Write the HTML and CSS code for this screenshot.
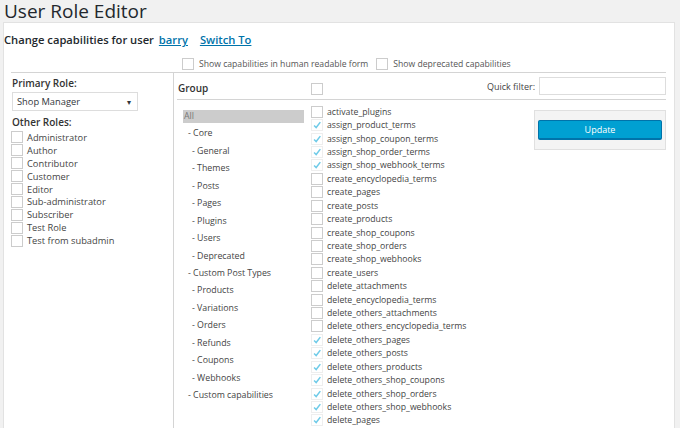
FILE: index.html
```html
<!DOCTYPE html>
<html>
<head>
<meta charset="utf-8">
<link rel="stylesheet" href="styles.css">
</head>
<body>
<h1 class="title">User Role Editor</h1>
<div class="panel">
  <div class="user-line">Change capabilities for user <a href="#" class="link barry">barry</a> <a href="#" class="link switch">Switch To</a></div>
  <div class="options">
    <label class="opt"><span class="cb"></span>Show capabilities in human readable form</label>
    <label class="opt"><span class="cb"></span>Show deprecated capabilities</label>
  </div>
  <div class="editor">
    <div class="roles">
      <div class="label">Primary Role:</div>
      <div class="select"><span>Shop Manager</span><span class="arrow">▾</span></div>
      <div class="label other">Other Roles:</div>
      <ul class="role-list">
        <li><span class="cb"></span>Administrator</li>
        <li><span class="cb"></span>Author</li>
        <li><span class="cb"></span>Contributor</li>
        <li><span class="cb"></span>Customer</li>
        <li><span class="cb"></span>Editor</li>
        <li><span class="cb"></span>Sub-administrator</li>
        <li><span class="cb"></span>Subscriber</li>
        <li><span class="cb"></span>Test Role</li>
        <li><span class="cb"></span>Test from subadmin</li>
      </ul>
    </div>
    <div class="caps">
      <div class="caps-head">
        <div class="group-title">Group</div>
        <span class="cb head-cb"></span>
        <div class="filter"><span>Quick filter:</span><span class="filter-input"></span></div>
      </div>
      <div class="caps-body">
        <ul class="groups">
          <li class="active">All</li>
          <li class="l1">- Core</li>
          <li class="l2">- General</li>
          <li class="l2">- Themes</li>
          <li class="l2">- Posts</li>
          <li class="l2">- Pages</li>
          <li class="l2">- Plugins</li>
          <li class="l2">- Users</li>
          <li class="l2">- Deprecated</li>
          <li class="l1">- Custom Post Types</li>
          <li class="l2">- Products</li>
          <li class="l2">- Variations</li>
          <li class="l2">- Orders</li>
          <li class="l2">- Refunds</li>
          <li class="l2">- Coupons</li>
          <li class="l2">- Webhooks</li>
          <li class="l1">- Custom capabilities</li>
        </ul>
        <ul class="cap-list">
          <li><span class="cb"></span>activate_plugins</li>
          <li><span class="cb on"><svg viewBox="0 0 12 12"><path d="M2.5 6.5 L5 9 L10 2.5"/></svg></span>assign_product_terms</li>
          <li><span class="cb on"><svg viewBox="0 0 12 12"><path d="M2.5 6.5 L5 9 L10 2.5"/></svg></span>assign_shop_coupon_terms</li>
          <li><span class="cb on"><svg viewBox="0 0 12 12"><path d="M2.5 6.5 L5 9 L10 2.5"/></svg></span>assign_shop_order_terms</li>
          <li><span class="cb on"><svg viewBox="0 0 12 12"><path d="M2.5 6.5 L5 9 L10 2.5"/></svg></span>assign_shop_webhook_terms</li>
          <li><span class="cb"></span>create_encyclopedia_terms</li>
          <li><span class="cb"></span>create_pages</li>
          <li><span class="cb"></span>create_posts</li>
          <li><span class="cb"></span>create_products</li>
          <li><span class="cb"></span>create_shop_coupons</li>
          <li><span class="cb"></span>create_shop_orders</li>
          <li><span class="cb"></span>create_shop_webhooks</li>
          <li><span class="cb"></span>create_users</li>
          <li><span class="cb"></span>delete_attachments</li>
          <li><span class="cb"></span>delete_encyclopedia_terms</li>
          <li><span class="cb"></span>delete_others_attachments</li>
          <li><span class="cb"></span>delete_others_encyclopedia_terms</li>
          <li><span class="cb on"><svg viewBox="0 0 12 12"><path d="M2.5 6.5 L5 9 L10 2.5"/></svg></span>delete_others_pages</li>
          <li><span class="cb on"><svg viewBox="0 0 12 12"><path d="M2.5 6.5 L5 9 L10 2.5"/></svg></span>delete_others_posts</li>
          <li><span class="cb on"><svg viewBox="0 0 12 12"><path d="M2.5 6.5 L5 9 L10 2.5"/></svg></span>delete_others_products</li>
          <li><span class="cb on"><svg viewBox="0 0 12 12"><path d="M2.5 6.5 L5 9 L10 2.5"/></svg></span>delete_others_shop_coupons</li>
          <li><span class="cb on"><svg viewBox="0 0 12 12"><path d="M2.5 6.5 L5 9 L10 2.5"/></svg></span>delete_others_shop_orders</li>
          <li><span class="cb on"><svg viewBox="0 0 12 12"><path d="M2.5 6.5 L5 9 L10 2.5"/></svg></span>delete_others_shop_webhooks</li>
          <li><span class="cb on"><svg viewBox="0 0 12 12"><path d="M2.5 6.5 L5 9 L10 2.5"/></svg></span>delete_pages</li>
          <li><span class="cb on"><svg viewBox="0 0 12 12"><path d="M2.5 6.5 L5 9 L10 2.5"/></svg></span>delete_posts</li>
        </ul>
        <div class="actions">
          <button class="update">Update</button>
        </div>
      </div>
    </div>
  </div>
</div>
</body>
</html>
```
FILE: styles.css
```css
html, body {
  margin: 0;
  padding: 0;
  height: 100%;
  overflow: hidden;
}
body {
  background: #f1f1f1;
  font-family: "Open Sans", "Liberation Sans", sans-serif;
  color: #444;
}
.title {
  margin: 0;
  padding: 2px 0 0 4px;
  font-size: 19px;
  font-weight: 400;
  line-height: 18px;
  color: #23282d;
  box-sizing: border-box;
  height: 22px;
}
.panel {
  margin: 0 5px 0 3px;
  background: #fff;
  border: 1px solid #e2e2e2;
  border-bottom: none;
  height: 420px;
}
.user-line {
  padding: 9px 0 0 0;
  height: 25px;
  font-size: 11.2px;
  font-weight: 600;
  color: #23282d;
  line-height: 16px;
}
.link {
  color: #0073aa;
  text-decoration: underline;
}
.barry {
  margin-left: 2px;
}
.switch {
  margin-left: 9px;
}
.options {
  display: flex;
  gap: 8px;
  padding-left: 178px;
  height: 13px;
  align-items: center;
  font-size: 8.65px;
  color: #555;
}
.opt {
  display: flex;
  align-items: center;
}
.cb {
  display: inline-block;
  box-sizing: border-box;
  width: 12px;
  height: 12px;
  border: 1px solid #ccc;
  background: #fff;
  margin-right: 5px;
  flex: none;
}
.cb.on {
  border-color: #eee;
}
.cb svg {
  width: 10px;
  height: 10px;
  display: block;
  fill: none;
  stroke: #6fcbe8;
  stroke-width: 1.8;
}
.editor {
  display: flex;
  margin: 2px 8px 0 7px;
  border-top: 1px solid #d4d4d4;
  height: 400px;
}
.roles {
  width: 163px;
  border-right: 1px solid #d4d4d4;
  padding: 3px 0 0 0;
  box-sizing: border-box;
}
.label {
  font-size: 10px;
  font-weight: 600;
  color: #333;
  line-height: 14px;
  padding-left: 1px;
}
.select {
  margin: 2px 0 0 1px;
  width: 126px;
  height: 19px;
  box-sizing: border-box;
  border: 1px solid #ddd;
  display: flex;
  align-items: center;
  justify-content: space-between;
  padding: 0 6px 0 4px;
  font-size: 9.3px;
  color: #32373c;
}
.arrow {
  font-size: 8px;
}
.other {
  margin-top: 4px;
}
.role-list {
  list-style: none;
  margin: 2px 0 0 0;
  padding: 0;
  font-size: 9.3px;
  color: #444;
}
.role-list li {
  display: flex;
  align-items: center;
  height: 12.9px;
}
.role-list .cb {
  margin-right: 4px;
}
.caps {
  flex: 1;
  padding-left: 3px;
}
.caps-head {
  display: flex;
  align-items: center;
  height: 26px;
  border-bottom: 1px solid #d4d4d4;
}
.group-title {
  width: 133px;
  padding: 4px 0 0 1px;
  font-size: 10px;
  font-weight: 600;
  color: #333;
}
.head-cb {
  margin-top: 6px;
}
.filter {
  margin-left: auto;
  display: flex;
  align-items: center;
  font-size: 9px;
  color: #444;
}
.filter-input {
  display: block;
  margin-left: 4px;
  width: 127px;
  height: 18px;
  box-sizing: border-box;
  border: 1px solid #ddd;
}
.caps-body {
  display: flex;
  padding-top: 4px;
}
.groups {
  list-style: none;
  margin: 6px 0 0 6px;
  padding: 0;
  width: 121px;
  font-size: 8.8px;
  color: #444;
}
.groups li {
  height: 13px;
  line-height: 13px;
  margin-bottom: 4.45px;
}
.groups li.active {
  background: #ccc;
  color: #777;
  padding-left: 1px;
}
.groups li.l1 { padding-left: 5px; }
.groups li.l2 { padding-left: 9px; }
.cap-list {
  list-style: none;
  margin: 1px 0 0 7px;
  padding: 0;
  width: 215px;
  font-size: 8.7px;
  color: #444;
}
.cap-list li {
  display: flex;
  align-items: center;
  height: 13.43px;
}
.cap-list .cb {
  margin-right: 4px;
}
.actions {
  margin: 6px 0 0 auto;
  width: 132px;
  height: 40px;
  box-sizing: border-box;
  background: #f4f4f4;
  border: 1px solid #e0e0e0;
  display: flex;
  align-items: center;
  justify-content: center;
}
.update {
  width: 124px;
  height: 20px;
  background: #00a0d2;
  border: 1px solid #0073aa;
  border-bottom-width: 2px;
  border-radius: 2px;
  color: #fff;
  font-family: "Open Sans", "Liberation Sans", sans-serif;
  font-size: 9px;
  padding: 0;
}
```
